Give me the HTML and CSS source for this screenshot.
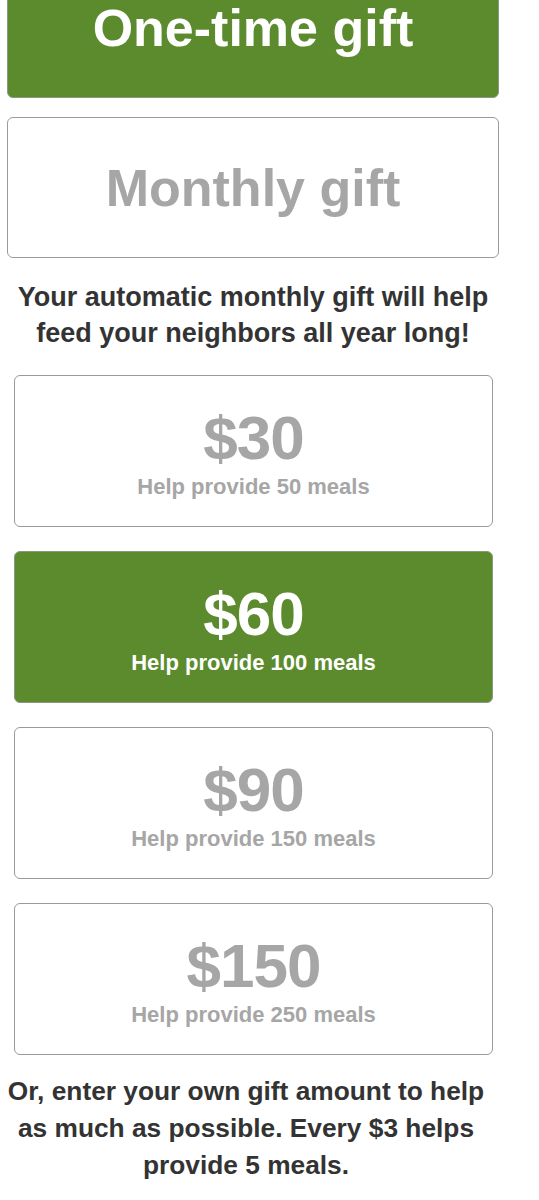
FILE: index.html
```html
<!DOCTYPE html>
<html lang="en">
<head>
  <meta charset="UTF-8">
  <title>Give a gift</title>
  <meta name="viewport" content="width=device-width, initial-scale=1.0">
  <link rel="stylesheet" href="styles.css">
</head>
<body>
  <div class="container">
    <div class="frequency">
      <button class="freq-btn selected">One-time gift</button>
      <button class="freq-btn">Monthly gift</button>
    </div>
    <p class="intro">Your automatic monthly gift will help feed your neighbors all year long!</p>
    <div class="amounts">
      <button class="amount-btn">
        <span class="amount">$30</span>
        <span class="meals">Help provide 50 meals</span>
      </button>
      <button class="amount-btn selected">
        <span class="amount">$60</span>
        <span class="meals">Help provide 100 meals</span>
      </button>
      <button class="amount-btn">
        <span class="amount">$90</span>
        <span class="meals">Help provide 150 meals</span>
      </button>
      <button class="amount-btn">
        <span class="amount">$150</span>
        <span class="meals">Help provide 250 meals</span>
      </button>
    </div>
    <p class="outro">Or, enter your own gift amount to help as much as possible. Every $3 helps provide 5 meals.</p>
  </div>
</body>
</html>
```

FILE: styles.css
```css
html, body {
  margin: 0;
  padding: 0;
  background: #fff;
  font-family: "Liberation Sans", Arial, sans-serif;
  color: #333;
}
.container {
  width: 492px;
  margin: -43px 0 0 7px;
  display: flex;
  flex-direction: column;
}
button {
  font-family: inherit;
  cursor: pointer;
  box-sizing: border-box;
  border: 1px solid #9a9a9a;
  border-radius: 6px;
  background: #fff;
  color: #a6a6a6;
  font-weight: bold;
  padding: 0;
}
button.selected {
  background: #5b8b2d;
  border-color: #8a9a80;
  color: #fff;
}
.frequency {
  display: flex;
  flex-direction: column;
  gap: 19px;
}
.freq-btn {
  width: 100%;
  height: 141px;
  font-size: 52px;
  line-height: 1;
}
.intro,
.outro {
  margin: 0;
  text-align: center;
  font-weight: bold;
  font-size: 27px;
  line-height: 36px;
}
.intro {
  padding: 21px 0 24px;
}
.amounts {
  display: flex;
  flex-direction: column;
  gap: 24px;
  padding: 0 6px 0 7px;
}
.amount-btn {
  width: 100%;
  height: 152px;
  padding-top: 4px;
  display: flex;
  flex-direction: column;
  align-items: center;
  justify-content: center;
}
.amount {
  font-size: 62px;
  line-height: 62px;
  letter-spacing: -1px;
}
.meals {
  font-size: 22px;
  line-height: 26px;
  margin-top: 5px;
}
.outro {
  padding: 18px 14px 0 0;
  font-size: 26.3px;
  line-height: 37px;
}
```
